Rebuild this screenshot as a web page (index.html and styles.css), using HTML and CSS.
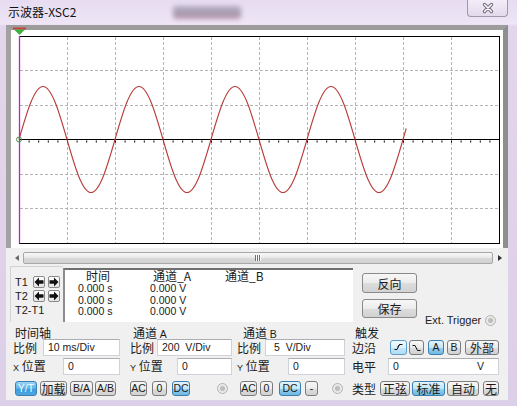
FILE: index.html
```html
<!DOCTYPE html>
<html lang="zh">
<head>
<meta charset="utf-8">
<title>示波器-XSC2</title>
<link rel="stylesheet" href="styles.css">
</head>
<body>
<div class="window">
  <div class="titlebar">
    <span class="title">示波器-XSC2</span>
    <span class="blurbox"></span>
    <span class="close">
      <svg width="14" height="12" viewBox="0 0 14 12"><path d="M3.5 2.5 L10.5 9.5 M10.5 2.5 L3.5 9.5" stroke="#6e6676" stroke-width="3.4" stroke-linecap="round"/><path d="M3.5 2.5 L10.5 9.5 M10.5 2.5 L3.5 9.5" stroke="#fff" stroke-width="1.5" stroke-linecap="round"/></svg>
    </span>
  </div>
  <div class="client">
    <div class="scope-frame">
      <svg class="scope" width="492" height="218" viewBox="0 0 492 218">
        <g stroke="#b4b4b4" stroke-width="1" stroke-dasharray="3 2" fill="none">
          <path d="M56.5 7V213 M104.5 7V213 M152.5 7V213 M200.5 7V213 M248.5 7V213 M296.5 7V213 M344.5 7V213 M392.5 7V213 M440.5 7V213"/>
          <path d="M9 40.5H488 M9 75.5H488 M9 144.5H488 M9 178.5H488"/>
        </g>
        <rect x="8.5" y="6.5" width="480" height="207" fill="none" stroke="#000"/>
        <path d="M9 109.5H488" stroke="#000" stroke-width="1.2"/>
        <path d="M8 111.5H488" stroke="#000" stroke-width="2" stroke-dasharray="1 8.6"/>
        <path d="M8 109.5 c7.83 -27.15 15.31 -53 24 -53 s16.17 25.85 24 53 s15.31 53 24 53 s16.17 -25.85 24 -53 s15.31 -53 24 -53 s16.17 25.85 24 53 s15.31 53 24 53 s16.17 -25.85 24 -53 s15.31 -53 24 -53 s16.17 25.85 24 53 s15.31 53 24 53 s16.17 -25.85 24 -53 s15.31 -53 24 -53 s16.17 25.85 24 53 s15.31 53 24 53 s16.17 -25.85 24 -53 l3.2 -11" fill="none" stroke="#b83a3a" stroke-width="1.1"/>
        <path d="M8.5 6V213.5" stroke="#c020c8" stroke-width="1.3"/>
        <circle cx="8" cy="109.5" r="2.5" fill="none" stroke="#3a9a3a" stroke-width="1"/>
        <rect x="2" y="-2.5" width="13" height="2" fill="#d03a3a"/>
        <path d="M3 -0.5 H14 L8.5 5 Z" fill="#40b040"/>
      </svg>
    </div>
    <div class="scrollbar">
      <span class="sb-arrow left"></span>
      <div class="sb-thumb"><span class="grip"></span></div>
      <span class="sb-arrow right"></span>
    </div>
    <div class="cursor-row">
      <div class="tpanel">
        <div class="trow">
          <span class="tlabel">T1</span>
          <span class="abtn"><svg width="10" height="10" viewBox="0 0 10 10"><path d="M0.5 5 L5 0.5 V3.2 H9.5 V6.8 H5 V9.5 Z" fill="#111"/></svg></span>
          <span class="abtn"><svg width="10" height="10" viewBox="0 0 10 10"><path d="M9.5 5 L5 0.5 V3.2 H0.5 V6.8 H5 V9.5 Z" fill="#111"/></svg></span>
        </div>
        <div class="trow">
          <span class="tlabel">T2</span>
          <span class="abtn"><svg width="10" height="10" viewBox="0 0 10 10"><path d="M0.5 5 L5 0.5 V3.2 H9.5 V6.8 H5 V9.5 Z" fill="#111"/></svg></span>
          <span class="abtn"><svg width="10" height="10" viewBox="0 0 10 10"><path d="M9.5 5 L5 0.5 V3.2 H0.5 V6.8 H5 V9.5 Z" fill="#111"/></svg></span>
        </div>
        <div class="trow">
          <span class="tlabel">T2-T1</span>
        </div>
      </div>
      <div class="readout">
        <div class="rgrid head"><span class="c1">时间</span><span class="c2">通道_A</span><span class="c3">通道_B</span></div>
        <div class="rgrid"><span>0.000 s</span><span>0.000 V</span><span></span></div>
        <div class="rgrid"><span>0.000 s</span><span>0.000 V</span><span></span></div>
        <div class="rgrid"><span>0.000 s</span><span>0.000 V</span><span></span></div>
      </div>
      <div class="btncol">
        <button class="btn big">反向</button>
        <button class="btn big b2">保存</button>
      </div>
      <div class="ext"><span>Ext. Trigger</span><span class="radio"></span></div>
    </div>
    <div class="controls">
      <div class="group g-time">
        <div class="ghead">时间轴</div>
        <div class="frow"><span class="lbl">比例</span><span class="field w77">10 ms/Div</span></div>
        <div class="frow"><span class="lbl"><span class="sm">X</span> 位置</span><span class="field w57">0</span></div>
        <div class="brow">
          <button class="btn sel strong w22">Y/T</button>
          <button class="btn cjk w27 g3">加载</button>
          <button class="btn w23 g3">B/A</button>
          <button class="btn w21 g2">A/B</button>
        </div>
      </div>
      <div class="group g-a">
        <div class="ghead">通道 <span class="lat">A</span></div>
        <div class="frow"><span class="lbl">比例</span><span class="field w75">200&nbsp; V/Div</span></div>
        <div class="frow"><span class="lbl"><span class="sm">Y</span> 位置</span><span class="field w55">0</span></div>
        <div class="brow">
          <button class="btn w17">AC</button>
          <button class="btn w15 g5">0</button>
          <button class="btn sel w18 g5">DC</button>
          <span class="radio ra"></span>
        </div>
      </div>
      <div class="group g-b">
        <div class="ghead">通道 <span class="lat">B</span></div>
        <div class="frow"><span class="lbl">比例</span><span class="field w80 pb">5&nbsp; V/Div</span></div>
        <div class="frow"><span class="lbl"><span class="sm">Y</span> 位置</span><span class="field w57">0</span></div>
        <div class="brow">
          <button class="btn w17">AC</button>
          <button class="btn w13 g3">0</button>
          <button class="btn sel w22 g6">DC</button>
          <button class="btn w13 g4">-</button>
          <span class="radio rb"></span>
        </div>
      </div>
      <div class="group g-trig">
        <div class="ghead">触发</div>
        <div class="frow">
          <span class="lbl">边沿</span>
          <span class="edge">
            <button class="btn sel light w17"><svg width="11" height="9" viewBox="0 0 11 9"><path d="M1.5 6.5 H4 L6.5 1.5 H9.5 M4.6 4.2 L6.5 1.5" fill="none" stroke="#111" stroke-width="1"/></svg></button>
            <button class="btn w15 g2"><svg width="11" height="9" viewBox="0 0 11 9"><path d="M1.5 2.5 H4 L6.5 7.5 H9.5" fill="none" stroke="#111" stroke-width="1"/></svg></button>
            <button class="btn sel w16 g4">A</button>
            <button class="btn w14 g3">B</button>
            <button class="btn cjk w34 g4">外部</button>
          </span>
        </div>
        <div class="frow"><span class="lbl">电平</span><span class="field w111 level"><span>0</span><span class="unit">V</span></span></div>
        <div class="brow">
          <span class="lbl">类型</span>
          <span class="types">
            <button class="btn cjk w30">正弦</button>
            <button class="btn cjk sel w33 g2">标准</button>
            <button class="btn cjk w32 g2">自动</button>
            <button class="btn cjk w16 g4">无</button>
          </span>
        </div>
      </div>
    </div>
  </div>
</div>
</body>
</html>
```

FILE: styles.css
```css
* { box-sizing: border-box; }
html, body { margin: 0; padding: 0; }
body {
  width: 517px; height: 406px; overflow: hidden;
  background: #d8cbe4;
  font-family: "Liberation Sans", "Noto Sans CJK SC", sans-serif;
  color: #1a1a1a;
}
.window {
  width: 517px; height: 406px;
  display: flex; flex-direction: column;
  background: linear-gradient(to bottom, #e7dcf1 0px, #eee5f6 24px, #e2d6ec 26px, #dccfe8 100%);
}
.titlebar { height: 25px; flex: none; display: flex; align-items: flex-start; }
.title {
  width: 165px; margin: 4px 0 0 8px;
  font-family: "Noto Sans CJK SC", sans-serif; font-size: 12px; line-height: 16px; color: #111;
}
.blurbox {
  width: 68px; height: 13px; margin-top: 6px; border-radius: 3px;
  background: linear-gradient(to bottom, #a39ab0, #8f8499 60%, #b07a90);
  filter: blur(2.5px); opacity: .75;
}
.close {
  margin-left: auto; margin-right: 9px; width: 41px; height: 17px;
  display: flex; align-items: center; justify-content: center;
  border: 1px solid #a196ad; border-top: none; border-radius: 0 0 4px 4px;
  background: linear-gradient(to bottom, #f3edf8, #e3d9ec);
}
.close svg { display: block; }
.client { flex: none; margin-left: 6px; width: 502px; height: 375px; background: #f0f0f0; }
.scope-frame {
  height: 223px; background: #fff;
  border: 5px solid #999; border-bottom: none;
  border-top-color: #9c9c9c; border-left-color: #a2a2a2; border-right-color: #8e8e8e;
}
.scope { display: block; overflow: visible; }

.scrollbar { margin: 3px 0 0 4px; width: 496px; height: 13px; display: flex; align-items: center; }
.sb-arrow { width: 13px; height: 13px; display: flex; align-items: center; justify-content: center; }
.sb-arrow::before { content: ""; border-top: 3.5px solid transparent; border-bottom: 3.5px solid transparent; }
.sb-arrow.left::before { border-right: 4px solid #6a6a6a; }
.sb-arrow.right::before { border-left: 4px solid #303030; }
.sb-thumb {
  flex: 1; height: 12px; border: 1px solid #a7a7a7; border-radius: 2px;
  background: linear-gradient(to bottom, #f8f8f8, #e8e8e8 50%, #d9d9d9 51%, #d2d2d2);
  display: flex; align-items: center; justify-content: center;
}
.grip { width: 6px; height: 6px; background: repeating-linear-gradient(to right, #707070 0 1px, #fafafa 1px 2px); }

.cursor-row { margin-top: 2px; height: 58px; display: flex; align-items: flex-start; }
.tpanel {
  margin-left: 4px; width: 53px; height: 56px; padding: 9px 0 0 4px;
  border-top: 1px solid #d2d2d2; border-left: 1px solid #d2d2d2;
}
.trow { height: 12px; margin-bottom: 2px; display: flex; align-items: center; }
.tlabel { width: 18px; font-size: 11px; line-height: 12px; white-space: nowrap; }
.abtn {
  width: 12px; height: 12px; margin-right: 3px;
  border: 1px solid #8a8a8a; border-radius: 2px;
  background: linear-gradient(to bottom, #ffffff, #e4e4e4);
  display: flex; align-items: center; justify-content: center;
}
.abtn svg { display: block; }
.readout {
  margin-top: 2px; width: 290px; height: 54px; background: #fff;
  border-top: 2px solid #6f6f6f; border-left: 2px solid #8c8c8c;
  padding-left: 13px;
}
.rgrid { display: grid; grid-template-columns: 72px 72px 72px; height: 11.5px; line-height: 11.5px; font-size: 10.5px; }
.rgrid.head { height: 13px; line-height: 12px; font-size: 12px; font-family: "Noto Sans CJK SC", sans-serif; }
.head .c1 { padding-left: 8px; }
.head .c2, .head .c3 { padding-left: 3px; }
.btncol { margin: 7px 0 0 9px; width: 55px; display: flex; flex-direction: column; gap: 6px; }
.ext { margin: 47px 0 0 8px; height: 14px; display: flex; align-items: center; gap: 4px; font-size: 11px; white-space: nowrap; color: #222; }
.radio {
  display: inline-block; width: 11px; height: 11px; border-radius: 50%;
  border: 1px solid #b0b0b0;
  background: radial-gradient(circle, #bdbdbd 0 2px, #e6e6e6 3px, #f6f6f6 100%);
  flex: none;
}

.controls { display: flex; padding-top: 3px; }
.group { display: flex; flex-direction: column; }
.g-time { margin-left: 7px; width: 107px; }
.g-a { margin-left: 10px; width: 102px; }
.g-b { margin-left: 5px; width: 108px; }
.g-trig { margin-left: 7px; width: 147px; }
.ghead { height: 12px; line-height: 12px; font-size: 12px; font-family: "Noto Sans CJK SC", sans-serif; }
.g-time .ghead { padding-left: 2px; }
.g-a .ghead { padding-left: 3px; }
.g-b .ghead { padding-left: 6px; }
.g-trig .ghead { padding-left: 3px; }
.lat { font-family: "Liberation Sans", sans-serif; font-size: 10.5px; }
.frow { height: 17px; margin-bottom: 2px; display: flex; align-items: center; }
.lbl { font-size: 12px; line-height: 14px; font-family: "Noto Sans CJK SC", sans-serif; white-space: nowrap; }
.sm { font-family: "Liberation Sans", sans-serif; font-size: 9px; }
.field {
  margin-left: auto; height: 17px; background: #fff;
  border: 1px solid #cfd2d8; border-top-color: #abadb3;
  font-size: 10.5px; line-height: 15px; padding-left: 4px; white-space: nowrap;
}
.field.pb { padding-left: 8px; }
.level { display: flex; justify-content: space-between; padding-right: 14px; }
.w111 { width: 111px; }
.w80 { width: 80px; }
.w77 { width: 77px; }
.w75 { width: 75px; }
.w57 { width: 57px; }
.w55 { width: 55px; }
.brow { margin-top: 4px; height: 15px; display: flex; align-items: center; }
.g-time .brow { padding-left: 2px; }
.g-b .brow { padding-left: 3px; }

.btn {
  height: 15px; padding: 0; margin: 0;
  border: 1px solid #7c7c7c; border-radius: 3px;
  background: linear-gradient(to bottom, #f7f7f7, #ececec 50%, #dddddd 51%, #d2d2d2);
  font-family: "Liberation Sans", "Noto Sans CJK SC", sans-serif; font-size: 10.5px; line-height: 13px;
  color: #1a1a1a; text-align: center;
  display: flex; align-items: center; justify-content: center; flex: none;
}
.btn.cjk { font-family: "Noto Sans CJK SC", sans-serif; font-size: 12px; }
.btn.sel { border-color: #3c7fb1; background: linear-gradient(to bottom, #e5f4fc, #c4e5f6 50%, #98d1ef 51%, #6fb8e0); }
.btn.sel.light { background: linear-gradient(to bottom, #f2faff, #dcf0fb 50%, #c4e6f8 51%, #b2dcf3); border-color: #5a9ccc; }
.btn.strong { background: linear-gradient(to bottom, #9dd4f6, #5bb0e6 50%, #3d9ddc 51%, #4aa6e2); color: #f2f9ff; }
.btn.big {
  width: 55px; height: 20px; font-family: "Noto Sans CJK SC", sans-serif; font-size: 12px;
  border-color: #8a8a8a;
}
.btn.big.b2 { height: 19px; }
.w13 { width: 13px; } .w14 { width: 14px; } .w15 { width: 15px; } .w16 { width: 16px; }
.w17 { width: 17px; } .w18 { width: 18px; } .w21 { width: 21px; } .w22 { width: 22px; }
.w23 { width: 23px; } .w27 { width: 27px; } .w30 { width: 30px; } .w32 { width: 32px; }
.w33 { width: 33px; } .w34 { width: 34px; }
.g2 { margin-left: 2px; } .g3 { margin-left: 3px; } .g4 { margin-left: 4px; }
.g5 { margin-left: 5px; } .g6 { margin-left: 6px; }
.ra { margin-left: 27px; }
.rb { margin-left: 14px; }
.edge, .types { margin-left: auto; display: flex; align-items: center; }
.edge svg { display: block; }
```
